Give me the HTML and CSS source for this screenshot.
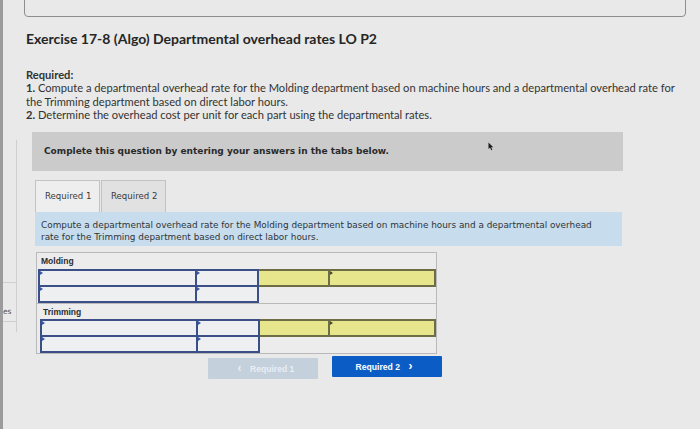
FILE: index.html
```html
<!DOCTYPE html>
<html>
<head>
<meta charset="utf-8">
<link rel="stylesheet" href="styles.css">
</head>
<body>
<div class="screen">
  <aside class="leftbar">
    <div class="sidepanel">
      <div class="sideitem">es</div>
    </div>
  </aside>
  <main class="main">
    <div class="topbox"></div>
    <h1 class="title">Exercise 17-8 (Algo) Departmental overhead rates LO P2</h1>
    <div class="required">
      <div class="req-head">Required:</div>
      <div><b>1.</b> Compute a departmental overhead rate for the Molding department based on machine hours and a departmental overhead rate for the Trimming department based on direct labor hours.</div>
      <div><b>2.</b> Determine the overhead cost per unit for each part using the departmental rates.</div>
    </div>
    <div class="notice">
      Complete this question by entering your answers in the tabs below.
      <svg class="cursor" width="6" height="9" viewBox="0 0 6 9"><path d="M0.5 0.5 L0.5 7 L2 5.5 L3.3 8.3 L4.3 7.8 L3.1 5.2 L5.2 5.2 Z" fill="#1a1a1a"/></svg>
    </div>
    <div class="tabs">
      <div class="tab active">Required 1</div>
      <div class="tab">Required 2</div>
    </div>
    <div class="instr">Compute a departmental overhead rate for the Molding department based on machine hours and a departmental overhead rate for the Trimming department based on direct labor hours.</div>
    <div class="sheet">
      <div class="section">
        <div class="label">Molding</div>
        <table class="grid">
          <tr><td class="in c1"></td><td class="in c2"></td><td class="y c3"></td><td class="y c4 mark"></td></tr>
          <tr><td class="in c1"></td><td class="in c2"></td><td class="blank" colspan="2"></td></tr>
        </table>
      </div>
      <div class="section last">
        <div class="label">Trimming</div>
        <table class="grid">
          <tr><td class="in c1"></td><td class="in c2"></td><td class="y c3"></td><td class="y c4 mark"></td></tr>
          <tr><td class="in c1"></td><td class="in c2"></td><td class="blank" colspan="2"></td></tr>
        </table>
      </div>
    </div>
    <div class="buttons">
      <div class="btn disabled"><span class="chev">&lsaquo;</span> Required 1</div>
      <div class="btn primary">Required 2 <span class="chev">&rsaquo;</span></div>
    </div>
  </main>
</div>
</body>
</html>
```
FILE: styles.css
```css
html, body {
  margin: 0;
  padding: 0;
}
body {
  width: 700px;
  height: 429px;
  overflow: hidden;
  background: #e8e9e8;
  color: #2b2b2b;
  font-family: "Lato", "Liberation Sans", sans-serif;
}
.screen {
  display: flex;
  height: 429px;
}
.leftbar {
  width: 14px;
  border-left: 3px solid #9b9b9b;
  flex: none;
}
.sidepanel {
  margin-top: 140px;
  height: 192px;
  border-right: 1px solid #cfcfcf;
  display: flex;
  flex-direction: column;
  justify-content: flex-end;
}
.sideitem {
  height: 40px;
  box-sizing: border-box;
  margin-bottom: 10px;
  border-top: 1px solid #cfcfcf;
  border-bottom: 1px solid #cfcfcf;
  font-family: "DejaVu Sans", sans-serif;
  font-size: 7.5px;
  color: #555;
  line-height: 10px;
  padding-top: 24px;
}
.main {
  flex: 1;
  position: relative;
}
.topbox {
  margin-left: 7px;
  width: 660px;
  height: 20px;
  margin-top: -5px;
  border: 1px solid #8e8e8e;
  border-radius: 4px;
}
.title {
  margin: 13px 0 0 9px;
  font-size: 14px;
  line-height: 18px;
  font-weight: 700;
  color: #262626;
}
.required {
  margin: 20px 0 0 9px;
  font-size: 11.15px;
  line-height: 13.4px;
  color: #333;
  width: 665px;
}
.req-head {
  font-weight: 700;
}
.notice {
  margin: 10px 0 0 15px;
  width: 591px;
  height: 39px;
  background: #cbcbcb;
  font-family: "DejaVu Sans", sans-serif;
  font-weight: 700;
  font-size: 9px;
  line-height: 39px;
  padding-left: 12px;
  box-sizing: border-box;
  color: #2a2a2a;
  position: relative;
}
.cursor {
  position: absolute;
  left: 456px;
  top: 10px;
}
.tabs {
  display: flex;
  margin: 9px 0 0 18px;
  gap: 1px;
}
.tab {
  height: 32px;
  width: 65px;
  box-sizing: border-box;
  border: 1px solid #c2c2c2;
  border-bottom: none;
  background: #e1e1e1;
  font-family: "DejaVu Sans", sans-serif;
  font-size: 8.6px;
  line-height: 31px;
  padding-left: 9px;
  color: #3a3a3a;
}
.tab.active {
  background: #eeeeee;
  height: 33px;
  margin-bottom: -1px;
}
.instr {
  margin: 0 0 0 18px;
  width: 587px;
  height: 34px;
  box-sizing: border-box;
  background: #c7dced;
  padding: 7px 18px 0 6px;
  font-family: "DejaVu Sans", sans-serif;
  font-size: 8.9px;
  line-height: 12px;
  color: #2f3438;
  position: relative;
}
.sheet {
  margin: 6px 0 0 19px;
  width: 401px;
  box-sizing: border-box;
  border: 1px solid #b9b9b9;
  background: #ececec;
}
.section {
  border-bottom: 1px solid #b9b9b9;
  padding: 0 0 0 1px;
}
.section.last {
  border-bottom: none;
  padding-left: 3px;
}
.label {
  height: 16px;
  line-height: 16px;
  font-family: "Liberation Sans", sans-serif;
  font-weight: 700;
  font-size: 8.5px;
  padding-left: 3px;
  color: #2c2c2c;
}
.section.last .label {
  height: 15px;
}
.grid {
  border-collapse: collapse;
  table-layout: fixed;
}
.grid td {
  height: 14px;
  padding: 0;
  position: relative;
}
.grid .c1 { width: 156px; }
.grid .c2 { width: 60px; }
.grid .c3 { width: 69px; }
.grid .c4 { width: 105px; }
.grid td.in {
  border: 2px solid #3a4e88;
  background: #eeeff0;
}
.grid td.y {
  border: 2px solid #6e6d45;
  background: #e8e68c;
}
.grid td.in::before,
.grid td.mark::before {
  content: "";
  position: absolute;
  left: 0;
  top: 0;
  border-left: 3px solid #3a58a8;
  border-top: 2px solid transparent;
  border-bottom: 2px solid transparent;
}
.grid td.mark::before {
  border-left-color: #4a4a2c;
}
.grid td.blank {
  border: none;
}
.buttons {
  display: flex;
  align-items: flex-start;
  gap: 14px;
  margin: 2px 0 0 191px;
}
.btn {
  width: 110px;
  height: 21px;
  line-height: 21px;
  text-align: center;
  font-family: "Liberation Sans", sans-serif;
  font-weight: 700;
  font-size: 8.6px;
  border-radius: 1px;
}
.btn.disabled {
  background: #c4d0dc;
  color: #e8eef4;
  margin-top: 2px;
}
.btn.primary {
  background: #0c5cc6;
  color: #ffffff;
}
.chev {
  font-size: 12px;
  margin: 0 6px;
}
```
